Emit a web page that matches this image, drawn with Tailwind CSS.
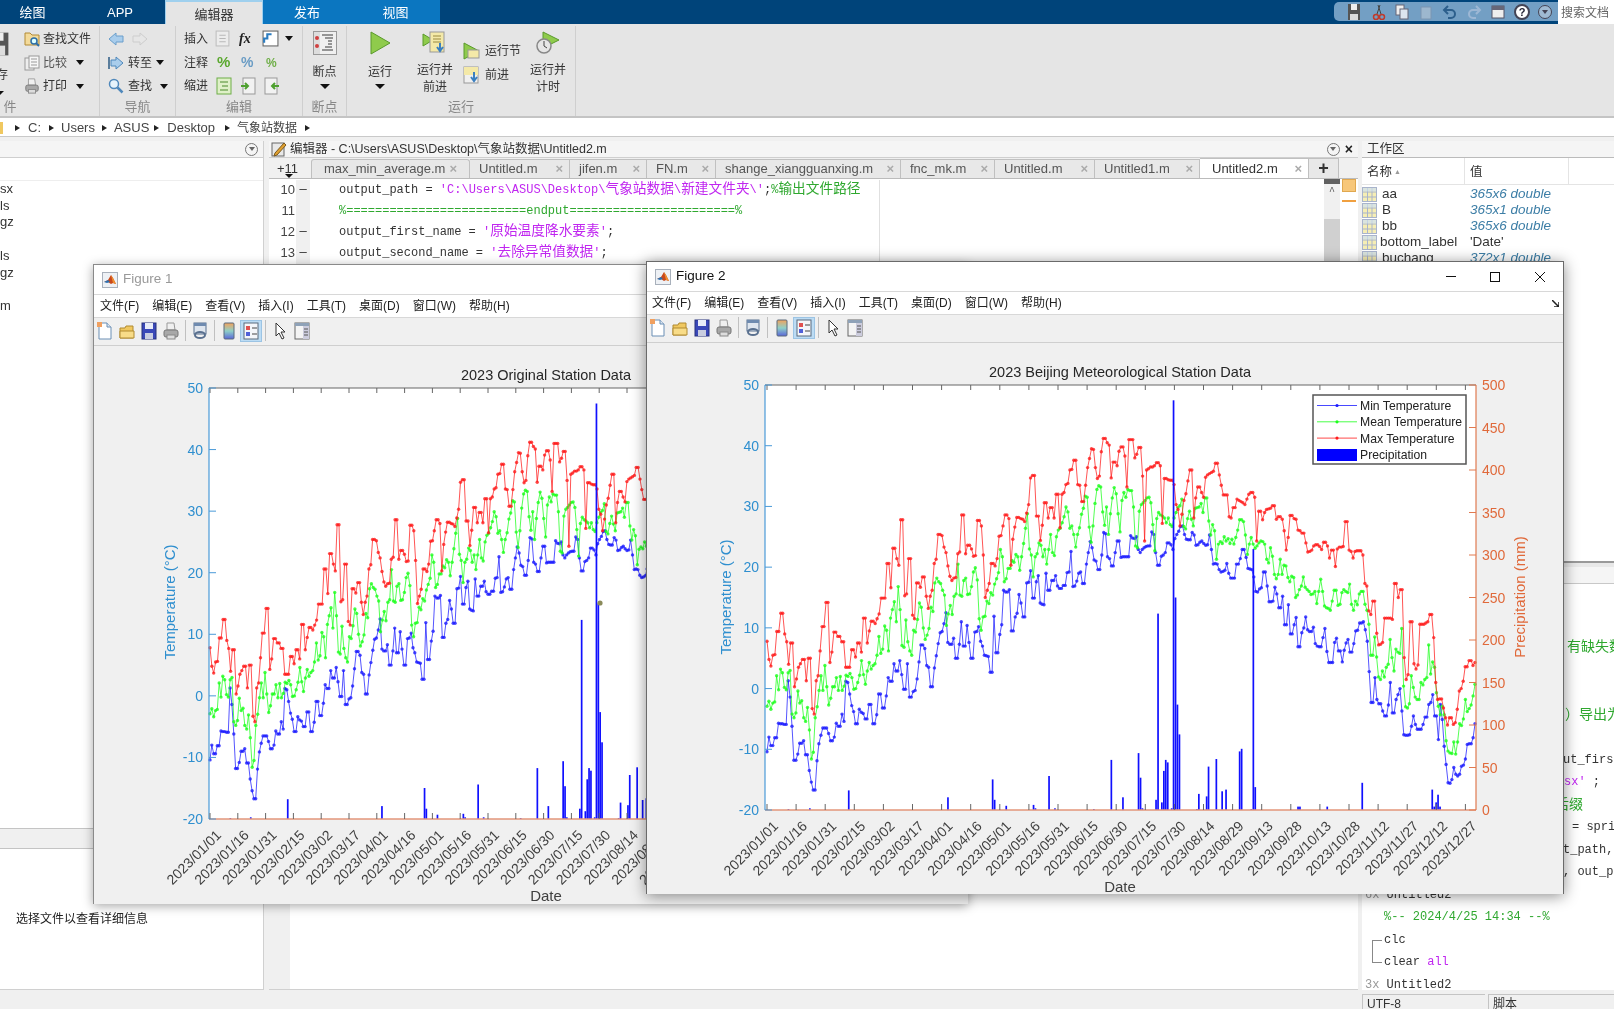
<!DOCTYPE html>
<html lang="en">

<head>
    <meta charset="UTF-8">
    <title>MATLAB</title>
    <script src="https://cdn.jsdelivr.net/npm/@tailwindcss/browser@4"></script>
</head>

<body class="bg-[#f0f0f0] overflow-hidden">

    <!-- shared icons -->
    <svg class="absolute w-0 h-0">
        <defs><linearGradient id="cb" x1="0" y1="0" x2="0" y2="1"><stop offset="0" stop-color="#f4a25a"/><stop offset=".5" stop-color="#8ed0c8"/><stop offset="1" stop-color="#5a66d8"/></linearGradient></defs>
        <symbol id="i-new" viewBox="0 0 16 18"><path d="M2 1h8l4 4v12H2z" fill="#fff" stroke="#6b8fb5"/><path d="M10 1v4h4" fill="#dbe6f2" stroke="#6b8fb5"/><rect x="0" y="0" width="5" height="5" fill="#f0a060"/></symbol>
        <symbol id="i-open" viewBox="0 0 16 18"><path d="M1 6h5l1-2h7v12H1z" fill="#f0c860" stroke="#b08a30"/><path d="M1 9h14v7H1z" fill="#f8dc88" stroke="#b08a30"/></symbol>
        <symbol id="i-save" viewBox="0 0 16 18"><rect x="1" y="1" width="14" height="16" fill="#3a48b8" stroke="#27307c"/><rect x="4" y="1" width="8" height="6" fill="#e8ecf8"/><rect x="4" y="11" width="8" height="6" fill="#c9cde0"/></symbol>
        <symbol id="i-print" viewBox="0 0 16 18"><path d="M4 1h7l1 7H4z" fill="#f0f0f0" stroke="#999"/><rect x="1" y="8" width="14" height="7" rx="2" fill="#a8a8a8" stroke="#777"/><rect x="4" y="13" width="8" height="4" fill="#ddd" stroke="#888"/></symbol>
        <symbol id="i-link" viewBox="0 0 16 18"><rect x="2" y="1" width="12" height="11" fill="#dfe6ef" stroke="#59708f"/><rect x="2" y="1" width="12" height="3" fill="#6f8bb0"/><ellipse cx="8" cy="13" rx="5" ry="3" fill="none" stroke="#59708f" stroke-width="2"/></symbol>
        <symbol id="i-bar" viewBox="0 0 16 18"><rect x="3" y="1" width="10" height="16" rx="1" fill="url(#cb)" stroke="#5a6a7c"/></symbol>
        <symbol id="i-legend" viewBox="0 0 16 18"><rect x="1" y="1" width="14" height="16" fill="#f4f6fa" stroke="#5a6a7c"/><rect x="3" y="4" width="4" height="4" fill="#e05050"/><rect x="3" y="10" width="4" height="4" fill="#5060d8"/><path d="M9 6h5M9 12h5" stroke="#444"/></symbol>
        <symbol id="i-cursor" viewBox="0 0 16 18"><path d="M4 1l9 9H9l3 6-2 1-3-6-3 3z" fill="#fff" stroke="#333"/></symbol>
        <symbol id="i-panel" viewBox="0 0 16 18"><rect x="1" y="1" width="14" height="16" fill="#f4f4f4" stroke="#666"/><rect x="1" y="1" width="14" height="3" fill="#8fa2b8"/><rect x="9" y="4" width="6" height="13" fill="#ccd"/><path d="M10 7h4M10 10h4M10 13h4" stroke="#555"/></symbol>
        <symbol id="i-logo" viewBox="0 0 16 16"><rect x=".5" y=".5" width="15" height="15" fill="#eef1f5" stroke="#a8b0bb"/><path d="M2 10l4-2 3-5 2 3 3 6-3-1-2 1-3-2z" fill="#c8481c"/><path d="M2 10l4-2 2 2-3 1z" fill="#2a6fb0"/><path d="M9 3l2 3 3 6-3-1z" fill="#f09030"/></symbol>
        <symbol id="i-play" viewBox="0 0 24 24"><path d="M3 1l19 11L3 23z" fill="#8fcb4c" stroke="#5a9a2c"/></symbol>
        <symbol id="i-page" viewBox="0 0 16 16"><rect x="2" y="1" width="12" height="14" fill="#f7f7f7" stroke="#888"/><path d="M5 5h6M5 8h6M5 11h6" stroke="#777"/></symbol>
        <symbol id="i-grid" viewBox="0 0 15 15"><rect x=".5" y=".5" width="14" height="14" fill="#f6eeb4" stroke="#a9b4cc"/><path d="M.5 5h14M.5 10h14M5.5.5v14M10 .5v14" stroke="#a9b4cc"/><rect x="1" y="1" width="13" height="3.5" fill="#cfe0f0" opacity=".7"/></symbol>
    </svg>

    <div class="relative w-[1614px] h-[1009px] overflow-hidden flex flex-col text-[#333] blur-[0.4px] font-['Liberation_Sans','Noto_Sans_CJK_SC',sans-serif]">

        <!-- Tab strip -->
        <div class="h-[24px] bg-[#00447a] flex items-stretch text-[13px] text-white shrink-0">
            <div class="w-[61px] text-center leading-[26px] pl-[4px]">绘图</div>
            <div class="w-[104px] text-center leading-[26px] pl-[14px]">APP</div>
            <div class="w-[98px] bg-[#e5e5e5] text-[#333] text-center leading-[26px] border-t-2 border-x border-[#9fd0ee]">编辑器</div>
            <div class="w-[88px] bg-[#0b76c0] text-center leading-[26px]">发布</div>
            <div class="w-[89px] bg-[#0b76c0] text-center leading-[26px]">视图</div>
            <div class="flex-1"></div>
            <!-- quick access -->
            <div class="w-[224px] mt-[2px] mb-[3px] bg-[#739fc4] flex items-center gap-[8px] pl-[12px] rounded-l-[5px]">
                <svg class="w-[16px] h-[18px]" viewBox="0 0 16 18"><rect x="2" y="1" width="12" height="16" fill="#555"/><rect x="5" y="1" width="6" height="6" fill="#eee"/><rect x="4" y="11" width="8" height="6" fill="#ddd"/></svg>
                <svg class="w-[16px] h-[16px]" viewBox="0 0 16 16"><path d="M10 1L7 10M8 1l3 9" stroke="#444" fill="none"/><circle cx="6" cy="13" r="2.5" fill="none" stroke="#c0392b" stroke-width="1.5"/><circle cx="12" cy="13" r="2.5" fill="none" stroke="#c0392b" stroke-width="1.5"/></svg>
                <svg class="w-[16px] h-[16px]" viewBox="0 0 16 16"><rect x="2" y="1" width="8" height="10" fill="#eee" stroke="#667"/><rect x="6" y="5" width="8" height="10" fill="#dce4ee" stroke="#667"/></svg>
                <svg class="w-[16px] h-[16px] opacity-40" viewBox="0 0 16 16"><rect x="3" y="3" width="10" height="12" fill="#ddd" stroke="#889"/></svg>
                <svg class="w-[16px] h-[16px]" viewBox="0 0 16 16"><path d="M6 2L2 6l4 4M2 6h7a4 4 0 010 8H6" fill="none" stroke="#2c5f8c" stroke-width="2"/></svg>
                <svg class="w-[16px] h-[16px] opacity-40" viewBox="0 0 16 16"><path d="M10 2l4 4-4 4M14 6H7a4 4 0 000 8h3" fill="none" stroke="#dde" stroke-width="2"/></svg>
                <svg class="w-[16px] h-[16px]" viewBox="0 0 16 16"><rect x="2" y="2" width="12" height="12" fill="#eee" stroke="#556"/><rect x="2" y="2" width="12" height="4" fill="#667"/></svg>
                <div class="w-[16px] h-[16px] rounded-full bg-white border-2 border-[#445] text-[#223] text-[11px] leading-[12px] text-center font-bold">?</div>
                <div class="w-[14px] h-[14px] rounded-full border border-[#445] bg-[#9fbad2] flex items-center justify-center"><div class="border-x-[3px] border-t-[4px] border-x-transparent border-t-[#445]"></div></div>
            </div>
            <div class="w-[56px] bg-white text-[#666] text-[12px] pl-[3px] leading-[26px]">搜索文档</div>
        </div>

        <!-- Ribbon -->
        <div class="h-[94px] bg-[#e5e5e5] border-b-2 border-[#c4c4c4] flex text-[12px] text-[#333] shrink-0">
            <!-- file group, cut off at the window edge -->
            <div class="w-[100px] mt-[2px] border-r border-[#cfcfcf] flex flex-col">
                <div class="h-[72px] shrink-0 flex">
                    <div class="w-[24px] flex flex-col overflow-hidden">
                        <svg class="w-[26px] h-[26px] ml-[-16px] mt-[5px] shrink-0" viewBox="0 0 16 16"><rect x="1" y="1" width="14" height="14" fill="#555"/><rect x="4" y="1" width="8" height="5" fill="#eee"/><rect x="3" y="9" width="10" height="6" fill="#ddd"/></svg>
                        <div class="ml-[-4px] mt-[9px]">存</div>
                        <div class="ml-[-4px] mt-[7px] w-0 border-x-[4px] border-t-[4px] border-x-transparent border-t-[#111]"></div>
                    </div>
                    <div class="flex flex-col pt-[1px]">
                        <div class="h-[24px] flex items-center gap-[3px]"><svg class="w-[16px] h-[16px]" viewBox="0 0 16 16"><path d="M1 2h5l2 2h7v10H1z" fill="#f3da9a" stroke="#b28a34"/><circle cx="10" cy="10" r="3" fill="#dff" stroke="#2b6ea8" stroke-width="1.5"/><path d="M12 12l3 3" stroke="#2b6ea8" stroke-width="2"/></svg>查找文件</div>
                        <div class="h-[24px] flex items-center gap-[3px]"><svg class="w-[16px] h-[16px]" viewBox="0 0 16 16"><rect x="1" y="3" width="9" height="12" fill="#eee" stroke="#999"/><rect x="5" y="1" width="10" height="12" fill="#f7f7f7" stroke="#999"/><path d="M7 4h6M7 7h6M7 10h6" stroke="#999"/></svg><span class="text-[#555]">比较</span><div class="ml-[6px] border-x-[4px] border-t-[5px] border-x-transparent border-t-[#111]"></div></div>
                        <div class="h-[24px] flex items-center gap-[3px]"><svg class="w-[16px] h-[16px]" viewBox="0 0 16 18"><use href="#i-print"/></svg>打印<div class="ml-[6px] border-x-[4px] border-t-[5px] border-x-transparent border-t-[#111]"></div></div>
                    </div>
                </div>
                <div class="h-[18px] text-[#888] text-[13px] leading-[18px]">&nbsp;件</div>
            </div>

            <!-- navigate -->
            <div class="w-[76px] mt-[2px] border-r border-[#cfcfcf] flex flex-col">
                <div class="h-[72px] shrink-0 flex flex-col pt-[1px] pl-[8px]">
                    <div class="h-[24px] flex items-center gap-[8px]">
                        <svg class="w-[16px] h-[14px]" viewBox="0 0 16 14"><path d="M1 7l7-6v3h7v6H8v3z" fill="#a9cdec" stroke="#6a9ecb"/></svg>
                        <svg class="w-[16px] h-[14px]" viewBox="0 0 16 14"><path d="M15 7L8 1v3H1v6h7v3z" fill="#e6e6e6" stroke="#cdcdcd"/></svg>
                    </div>
                    <div class="h-[24px] flex items-center gap-[4px]">
                        <svg class="w-[16px] h-[14px]" viewBox="0 0 16 14"><path d="M0 1h2v12H0z" fill="#5a7d9c"/><path d="M15 7L8 1v3H3v6h5v3z" fill="#a9cdec" stroke="#4f88bb"/></svg>转至<div class="border-x-[4px] border-t-[5px] border-x-transparent border-t-[#111]"></div>
                    </div>
                    <div class="h-[24px] flex items-center gap-[4px]">
                        <svg class="w-[16px] h-[16px]" viewBox="0 0 16 16"><circle cx="6" cy="6" r="4.5" fill="#e6f3fb" stroke="#4f88bb" stroke-width="1.5"/><path d="M9.5 9.5l5 5" stroke="#4f88bb" stroke-width="2.5"/></svg>查找<div class="ml-[4px] border-x-[4px] border-t-[5px] border-x-transparent border-t-[#111]"></div>
                    </div>
                </div>
                <div class="h-[18px] text-[#888] text-[13px] leading-[18px] text-center">导航</div>
            </div>

            <!-- edit -->
            <div class="w-[127px] mt-[2px] border-r border-[#cfcfcf] flex flex-col">
                <div class="h-[72px] shrink-0 flex flex-col pt-[1px] pl-[8px]">
                    <div class="h-[24px] flex items-center gap-[6px]">插入
                        <svg class="w-[17px] h-[17px] opacity-40" viewBox="0 0 16 16"><use href="#i-page"/></svg>
                        <span class="w-[17px] text-[14px] italic font-bold font-['Liberation_Serif',serif] text-[#222] ml-[2px]">fx</span>
                        <svg class="w-[17px] h-[17px]" viewBox="0 0 16 16"><rect x="1" y="1" width="14" height="14" fill="#fff" stroke="#666"/><path d="M2 12V8h3V4h4" fill="none" stroke="#2c7cc0" stroke-width="2"/></svg>
                        <div class="border-x-[4px] border-t-[5px] border-x-transparent border-t-[#111]"></div>
                    </div>
                    <div class="h-[24px] flex items-center gap-[9px]">注释
                        <span class="w-[15px] text-[15px] font-bold text-[#5aa82e]">%</span>
                        <span class="w-[16px] text-[14px] font-bold text-[#6a9cc4]">%</span>
                        <span class="w-[16px] text-[12px] font-bold text-[#6fae48]">%</span>
                    </div>
                    <div class="h-[24px] flex items-center gap-[8px]">缩进
                        <svg class="w-[16px] h-[18px]" viewBox="0 0 16 18"><rect x="1" y="1" width="14" height="16" fill="#dff0c8" stroke="#6fae48"/><path d="M4 5h8M6 9h6M4 13h8" stroke="#4a8a2a"/></svg>
                        <svg class="w-[16px] h-[18px]" viewBox="0 0 16 18"><rect x="3" y="1" width="12" height="16" fill="#f2f2f2" stroke="#999"/><path d="M1 9h6M5 6l3 3-3 3" fill="none" stroke="#4fa030" stroke-width="2"/></svg>
                        <svg class="w-[16px] h-[18px]" viewBox="0 0 16 18"><rect x="1" y="1" width="12" height="16" fill="#f2f2f2" stroke="#999"/><path d="M15 9H9M11 6L8 9l3 3" fill="none" stroke="#4fa030" stroke-width="2"/></svg>
                    </div>
                </div>
                <div class="h-[18px] text-[#888] text-[13px] leading-[18px] text-center">编辑</div>
            </div>

            <!-- breakpoints -->
            <div class="w-[44px] mt-[2px] border-r border-[#cfcfcf] flex flex-col">
                <div class="h-[72px] shrink-0 flex flex-col items-center pt-[5px]">
                    <svg class="w-[24px] h-[24px]" viewBox="0 0 24 24"><rect x=".5" y=".5" width="23" height="23" fill="#f0f0f0" stroke="#999"/><rect x="1" y="1" width="6" height="22" fill="#ddd"/><circle cx="4" cy="7" r="2" fill="#d04040"/><circle cx="4" cy="15" r="2" fill="#d04040"/><path d="M9 4h11M12 7h8M15 10h4M15 13h4M12 16h7M9 19h11" stroke="#777" stroke-width="1.5"/></svg>
                    <div class="mt-[8px]">断点</div>
                    <div class="mt-[3px] border-x-[5px] border-t-[5px] border-x-transparent border-t-[#111]"></div>
                </div>
                <div class="h-[18px] text-[#888] text-[13px] leading-[18px] text-center">断点</div>
            </div>

            <!-- run -->
            <div class="w-[229px] mt-[2px] border-r border-[#cfcfcf] flex flex-col">
                <div class="h-[72px] shrink-0 flex pt-[5px]">
                    <div class="w-[66px] flex flex-col items-center">
                        <svg class="w-[24px] h-[24px]"><use href="#i-play"/></svg>
                        <div class="mt-[8px]">运行</div>
                        <div class="mt-[3px] border-x-[5px] border-t-[5px] border-x-transparent border-t-[#111]"></div>
                    </div>
                    <div class="w-[44px] flex flex-col items-center leading-[16.5px]">
                        <svg class="w-[26px] h-[24px] shrink-0" viewBox="0 0 26 24"><path d="M1 3l10 6-10 6z" fill="#8fcb4c" stroke="#5a9a2c"/><rect x="8" y="1" width="14" height="20" fill="#f4e9a8" stroke="#999"/><path d="M11 5h8M11 8h8M11 11h8" stroke="#9a8a40"/><path d="M18 12v7M15 16l3 4 3-4" stroke="#3a7fc0" fill="none" stroke-width="2"/></svg>
                        <div class="mt-[7px] text-center whitespace-nowrap">运行并<br>前进</div>
                    </div>
                    <div class="w-[68px] flex flex-col pl-[6px] pt-[11px] gap-[6px]">
                        <div class="h-[18px] flex items-center gap-[4px] whitespace-nowrap"><svg class="w-[18px] h-[18px]" viewBox="0 0 18 18"><path d="M1 1l15 8-15 8z" fill="#8fcb4c" stroke="#5a9a2c"/><rect x="5" y="8" width="11" height="8" fill="#f4e9a8" stroke="#999"/></svg>运行节</div>
                        <div class="h-[18px] flex items-center gap-[4px] whitespace-nowrap"><svg class="w-[18px] h-[18px]" viewBox="0 0 18 18"><rect x="1" y="1" width="14" height="16" fill="#f0f0f0" stroke="#999"/><rect x="1" y="1" width="14" height="8" fill="#f4e9a8"/><path d="M11 6v8M8 11l3 4 3-4" stroke="#3a7fc0" fill="none" stroke-width="2"/></svg>前进</div>
                    </div>
                    <div class="w-[46px] flex flex-col items-center leading-[16.5px]">
                        <svg class="w-[26px] h-[24px] shrink-0" viewBox="0 0 26 24"><path d="M8 1l16 8-16 8z" fill="#8fcb4c" stroke="#5a9a2c"/><circle cx="9" cy="15" r="7" fill="#e6e6e6" stroke="#888" stroke-width="1.5"/><path d="M9 10v5l3 2" stroke="#444" fill="none"/></svg>
                        <div class="mt-[7px] text-center whitespace-nowrap">运行并<br>计时</div>
                    </div>
                </div>
                <div class="h-[18px] text-[#888] text-[13px] leading-[18px] text-center">运行</div>
            </div>
            <div class="flex-1"></div>
        </div>

        <!-- Address bar -->
        <div class="h-[19px] bg-white border-b border-[#c9c9c9] flex items-center pt-[1px] text-[13px] text-[#444] shrink-0">
            <div class="w-[3px] h-[12px] bg-[#f0c860]"></div>
            <div class="ml-[12px] border-y-[3.5px] border-l-[5px] border-y-transparent border-l-[#222]"></div>
            <span class="ml-[8px]">C:</span>
            <div class="ml-[8px] border-y-[3.5px] border-l-[5px] border-y-transparent border-l-[#222]"></div>
            <span class="ml-[7px]">Users</span>
            <div class="ml-[7px] border-y-[3.5px] border-l-[5px] border-y-transparent border-l-[#222]"></div>
            <span class="ml-[7px]">ASUS</span>
            <div class="ml-[5px] border-y-[3.5px] border-l-[5px] border-y-transparent border-l-[#222]"></div>
            <span class="ml-[8px]">Desktop</span>
            <div class="ml-[10px] border-y-[3.5px] border-l-[5px] border-y-transparent border-l-[#222]"></div>
            <span class="ml-[7px] text-[12px]">气象站数据</span>
            <div class="ml-[8px] border-y-[3.5px] border-l-[5px] border-y-transparent border-l-[#222]"></div>
        </div>

        <!-- Panels -->
        <div class="flex-1 min-h-0 flex pt-[4px] bg-[#f0f0f0]">

            <!-- Current folder -->
            <div class="w-[264px] mr-[5px] shrink-0 flex flex-col bg-white border-r border-b border-[#d0d0d0] text-[13px]">
                <div class="h-[17px] bg-[#f5f5f5] border-b border-[#cfcfcf] flex items-center justify-end pr-[5px] shrink-0">
                    <div class="w-[13px] h-[13px] rounded-full border border-[#777] flex items-center justify-center"><div class="border-x-[3px] border-t-[4px] border-x-transparent border-t-[#666]"></div></div>
                </div>
                <div class="h-[23px] border-b border-[#eee] shrink-0"></div>
                <div class="flex flex-col leading-[16.7px] h-[647px] shrink-0">
                    <div>sx</div><div>ls</div><div>gz</div><div>&nbsp;</div><div>ls</div><div>gz</div><div>&nbsp;</div><div>m</div>
                </div>
                <div class="h-[21px] bg-[#f0f0f0] border-y border-[#c4c4c4] shrink-0"></div>
                <div class="flex-1 pl-[16px] pt-[61px] text-[12px] text-[#222]">选择文件以查看详细信息</div>
            </div>

            <!-- Editor -->
            <div class="w-[1089px] mr-[4px] shrink-0 flex flex-col bg-white border-b border-[#d0d0d0]">
                <div class="h-[17px] bg-[#f5f5f5] border-b border-[#cfcfcf] flex items-center text-[12.5px] text-[#333] shrink-0">
                    <svg class="w-[16px] h-[16px] ml-[2px] mr-[3px]" viewBox="0 0 16 16"><rect x="1" y="2" width="12" height="13" fill="#e8e8e8" stroke="#666"/><path d="M4 12L13 2l2 2-9 10-3 1z" fill="#e0a030" stroke="#7a5a20"/></svg>
                    编辑器 - C:\Users\ASUS\Desktop\气象站数据\Untitled2.m
                    <div class="ml-auto mr-[5px] w-[13px] h-[13px] rounded-full border border-[#777] flex items-center justify-center"><div class="border-x-[3px] border-t-[4px] border-x-transparent border-t-[#666]"></div></div>
                    <span class="mr-[5px] text-[14px] font-bold leading-none text-[#222]">×</span>
                </div>
                <!-- file tabs -->
                <div class="h-[21px] bg-[#f0f0f0] flex items-stretch text-[13px] text-[#555] shrink-0 border-b border-[#bbb]">
                    <div class="w-[42px] pl-[8px] leading-[21px] relative text-[#333]">+11
                        <div class="absolute left-[16px] bottom-[0px] border-x-[4px] border-t-[4px] border-x-transparent border-t-[#111]"></div>
                    </div>
                    <div class="w-[159px] bg-[#e8e8e8] border-x border-t border-[#c0c0c0] rounded-t-[3px] flex items-center justify-between px-[12px] mt-[1px]"><span>max_min_average.m</span><span class="text-[#aaa] font-bold">×</span></div>
                    <div class="w-[100px] bg-[#e8e8e8] border-r border-t border-[#c0c0c0] flex items-center justify-between pl-[9px] pr-[6px] mt-[1px]"><span>Untitled.m</span><span class="text-[#aaa] font-bold">×</span></div>
                    <div class="w-[77px] bg-[#e8e8e8] border-r border-t border-[#c0c0c0] flex items-center justify-between pl-[9px] pr-[6px] mt-[1px]"><span>jifen.m</span><span class="text-[#aaa] font-bold">×</span></div>
                    <div class="w-[69px] bg-[#e8e8e8] border-r border-t border-[#c0c0c0] flex items-center justify-between pl-[9px] pr-[6px] mt-[1px]"><span>FN.m</span><span class="text-[#aaa] font-bold">×</span></div>
                    <div class="w-[185px] bg-[#e8e8e8] border-r border-t border-[#c0c0c0] flex items-center justify-between pl-[9px] pr-[6px] mt-[1px]"><span>shange_xiangguanxing.m</span><span class="text-[#aaa] font-bold">×</span></div>
                    <div class="w-[94px] bg-[#e8e8e8] border-r border-t border-[#c0c0c0] flex items-center justify-between pl-[9px] pr-[6px] mt-[1px]"><span>fnc_mk.m</span><span class="text-[#aaa] font-bold">×</span></div>
                    <div class="w-[100px] bg-[#e8e8e8] border-r border-t border-[#c0c0c0] flex items-center justify-between pl-[9px] pr-[6px] mt-[1px]"><span>Untitled.m</span><span class="text-[#aaa] font-bold">×</span></div>
                    <div class="w-[105px] bg-[#e8e8e8] border-r border-t border-[#c0c0c0] flex items-center justify-between pl-[9px] pr-[6px] mt-[1px]"><span>Untitled1.m</span><span class="text-[#aaa] font-bold">×</span></div>
                    <div class="w-[109px] bg-white border-r border-t border-[#c0c0c0] flex items-center justify-between pl-[12px] pr-[6px] text-[#333]"><span>Untitled2.m</span><span class="text-[#aaa] font-bold">×</span></div>
                    <div class="w-[30px] bg-[#e8e8e8] border-r border-t border-[#c0c0c0] text-center text-[18px] font-bold leading-[19px] text-[#333]">+</div>
                </div>
                <!-- code -->
                <div class="h-[85px] flex shrink-0 font-['Liberation_Mono','Noto_Sans_CJK_SC',monospace] text-[12px] leading-[20.9px] relative pt-[1px]">
                    <div class="w-[26px] text-right text-[#444] font-['Liberation_Sans',sans-serif] text-[13px]">
                        <div>10</div><div>11</div><div>12</div><div>13</div>
                    </div>
                    <div class="w-[14px] bg-[#f0f0f0] text-center text-[#333] ml-[1px]">
                        <div>—</div><div>&nbsp;</div><div>—</div><div>—</div>
                    </div>
                    <div class="pl-[29px] w-[570px] border-r border-[#e0e0e0] whitespace-nowrap text-[#333]">
                        <div>output_path = <span class="text-[#c026f0]">'C:\Users\ASUS\Desktop\<span class="text-[13.7px]">气象站数据</span>\<span class="text-[13.7px]">新建文件夹</span>\'</span>;<span class="text-[#2fa82f]">%<span class="text-[13.7px]">输出文件路径</span></span></div>
                        <div class="text-[#2fa82f]">%=========================endput=======================%</div>
                        <div>output_first_name = <span class="text-[#c026f0]">'<span class="text-[13.7px]">原始温度降水要素</span>'</span>;</div>
                        <div>output_second_name = <span class="text-[#c026f0]">'<span class="text-[13.7px]">去除异常值数据</span>'</span>;</div>
                    </div>
                    <!-- scroll bar and overview strip -->
                    <div class="absolute left-[1055px] top-0 bottom-0 w-[16px] bg-[#f0f0f0] flex flex-col items-center">
                        <div class="w-full h-[5px] bg-[#606060]"></div>
                        <div class="text-[#555] text-[10px] leading-[16px]">^</div>
                        <div class="mt-[19px] flex-1 w-full bg-[#d0d0d0]"></div>
                    </div>
                    <div class="absolute left-[1073px] top-0 w-[14px]">
                        <div class="h-[13px] bg-[#f7c77a] border border-[#e0a850]"></div>
                        <div class="mt-[8px] h-[2px] bg-[#f0a040]"></div>
                    </div>
                </div>
                <div class="flex-1 flex">
                    <div class="w-[21px] bg-[#f0f0f0]"></div>
                </div>
            </div>

            <!-- Workspace and history -->
            <div class="w-[252px] min-w-0 shrink-0 overflow-hidden flex flex-col">
                <div class="h-[420px] bg-white flex flex-col shrink-0 text-[13.5px]">
                    <div class="h-[17px] bg-[#f5f5f5] border-b border-[#bbb] pl-[5px] text-[12.5px] leading-[16px] shrink-0">工作区</div>
                    <div class="h-[27px] border-b border-[#e4e4e4] flex items-center text-[12.5px] shrink-0">
                        <div class="w-[103px] h-full flex items-center border-r border-[#e4e4e4] pl-[5px] pt-[3px]">名称<span class="ml-[2px] text-[7px] text-[#999]">▲</span></div>
                        <div class="w-[104px] h-full flex items-center border-r border-[#e4e4e4] pl-[5px] pt-[3px]">值</div>
                    </div>
                    <div class="pt-[1px] leading-[16px]">
                        <div class="flex h-[16px] items-center"><svg class="w-[15px] h-[15px] mr-[5px]"><use href="#i-grid"/></svg><div class="w-[88px]">aa</div><div class="italic text-[#3d7ea6]">365x6 double</div></div>
                        <div class="flex h-[16px] items-center"><svg class="w-[15px] h-[15px] mr-[5px]"><use href="#i-grid"/></svg><div class="w-[88px]">B</div><div class="italic text-[#3d7ea6]">365x1 double</div></div>
                        <div class="flex h-[16px] items-center"><svg class="w-[15px] h-[15px] mr-[5px]"><use href="#i-grid"/></svg><div class="w-[88px]">bb</div><div class="italic text-[#3d7ea6]">365x6 double</div></div>
                        <div class="flex h-[16px] items-center"><svg class="w-[15px] h-[15px] mr-[3px]"><use href="#i-grid"/></svg><div class="w-[90px]">bottom_label</div><div>'Date'</div></div>
                        <div class="flex h-[16px] items-center"><svg class="w-[15px] h-[15px] mr-[5px]"><use href="#i-grid"/></svg><div class="w-[88px]">buchang</div><div class="italic text-[#3d7ea6]">372x1 double</div></div>
                    </div>
                </div>
                <div class="h-[6px] bg-[#e8e8e8] border-t-2 border-[#999] shrink-0"></div>
                <div class="h-[17px] bg-[#f5f5f5] border-b border-[#c8c8c8] shrink-0"></div>
                <!-- command history -->
                <div class="flex-1 bg-white border-b border-[#d0d0d0] pt-[52px] font-['Liberation_Mono','Noto_Sans_CJK_SC',monospace] text-[12px] leading-[22.5px] text-[#333] whitespace-nowrap">
                    <div class="h-[22.5px] pl-[205px] text-[#2fa82f] text-[14px]">有缺失数</div>
                    <div class="h-[22.5px]"></div>
                    <div class="h-[22.5px]"></div>
                    <div class="h-[22.5px] pl-[203px] text-[#2fa82f] text-[14px]">）导出为</div>
                    <div class="h-[22.5px]"></div>
                    <div class="h-[22.5px] pl-[201px]">ut_firs</div>
                    <div class="h-[22.5px] pl-[202px]"><span class="text-[#c026f0]">sx'</span> ;</div>
                    <div class="h-[22.5px] pl-[193px] text-[#2fa82f] text-[14px]">后缀</div>
                    <div class="h-[22.5px] pl-[210px]">= spri</div>
                    <div class="h-[22.5px] pl-[201px]">t_path,</div>
                    <div class="h-[22.5px] pl-[201px]">, out_p</div>
                    <div class="h-[22.5px] pl-[3px]"><span class="text-[#999]">6x</span> Untitled2</div>
                    <div class="h-[22.5px] pl-[22px] text-[#2fa82f]">%-- 2024/4/25 14:34 --%</div>
                    <div class="h-[22.5px] pl-[22px] relative">clc
                        <div class="absolute left-[10px] top-[11px] h-[23px] w-[10px] border-l border-t border-b border-[#888]"></div>
                    </div>
                    <div class="h-[22.5px] pl-[22px]">clear <span class="text-[#c026f0]">all</span></div>
                    <div class="h-[22.5px] pl-[3px]"><span class="text-[#999]">3x</span> Untitled2</div>
                </div>
            </div>
        </div>

        <!-- Status bar -->
        <div class="h-[19px] bg-[#f0f0f0] flex justify-end items-start text-[12px] text-[#333] shrink-0">
            <div class="w-[123px] mt-[4px] h-[15px] mr-[3px] border-l border-t border-[#c4c4c4] pl-[4px] leading-[18px]">UTF-8</div>
            <div class="w-[126px] mt-[4px] h-[15px] border-l border-t border-[#c4c4c4] pl-[4px] leading-[18px]">脚本</div>
        </div>

        <!-- Figure 1 -->
        <div class="absolute left-[93px] top-[264px] w-[875px] h-[640px] flex flex-col bg-[#f0f0f0] border-l border-t border-[#8a8a8a] shadow-[0_2px_10px_rgba(0,0,0,0.35)]">
            <div class="h-[29px] bg-white flex items-center text-[13.5px] text-[#999] shrink-0">
                <svg class="w-[16px] h-[16px] ml-[8px] mr-[5px]"><use href="#i-logo"/></svg>Figure 1
            </div>
            <div class="h-[24px] bg-white border-t border-b border-[#d8d8d8] flex items-center gap-[13px] pl-[6px] text-[12px] text-[#222] shrink-0">
                <span>文件(F)</span><span>编辑(E)</span><span>查看(V)</span><span>插入(I)</span><span>工具(T)</span><span>桌面(D)</span><span>窗口(W)</span><span>帮助(H)</span>
            </div>
            <div class="h-[28px] pb-[2px] border-b border-[#cfcfcf] flex items-center gap-[6px] pl-[3px] shrink-0">
                <svg class="w-[16px] h-[18px]"><use href="#i-new"/></svg>
                <svg class="w-[16px] h-[18px]"><use href="#i-open"/></svg>
                <svg class="w-[16px] h-[18px]"><use href="#i-save"/></svg>
                <svg class="w-[16px] h-[18px]"><use href="#i-print"/></svg>
                <div class="w-px h-[21px] bg-[#c0c0c0]"></div>
                <svg class="w-[16px] h-[18px]"><use href="#i-link"/></svg>
                <div class="w-px h-[21px] bg-[#c0c0c0]"></div>
                <svg class="w-[16px] h-[18px]"><use href="#i-bar"/></svg>
                <div class="w-[22px] h-[22px] -mx-[3px] bg-[#bcdcf4] border border-[#9cc4e4] flex items-center justify-center"><svg class="w-[16px] h-[18px]"><use href="#i-legend"/></svg></div>
                <div class="w-px h-[21px] bg-[#c0c0c0]"></div>
                <svg class="w-[16px] h-[18px]"><use href="#i-cursor"/></svg>
                <svg class="w-[16px] h-[18px]"><use href="#i-panel"/></svg>
            </div>
            <svg id="plot1" class="w-full flex-1 min-h-0"></svg>
        </div>

        <!-- Figure 2 -->
        <div class="absolute left-[646px] top-[261px] w-[918px] h-[633px] flex flex-col bg-[#f0f0f0] border-l border-t border-r border-[#6a6a6a] shadow-[0_2px_14px_rgba(0,0,0,0.45)]">
            <div class="h-[29px] bg-white flex items-center text-[13.5px] text-[#111] shrink-0">
                <svg class="w-[16px] h-[16px] ml-[8px] mr-[5px]"><use href="#i-logo"/></svg>Figure 2
                <div class="ml-auto flex items-center gap-[34px] pr-[17px]">
                    <div class="w-[10px] h-px bg-[#111]"></div>
                    <div class="w-[10px] h-[10px] border border-[#111]"></div>
                    <svg class="w-[12px] h-[12px]" viewBox="0 0 12 12"><path d="M1 1l10 10M11 1L1 11" stroke="#111"/></svg>
                </div>
            </div>
            <div class="h-[24px] bg-white border-t border-b border-[#d8d8d8] flex items-center gap-[13px] pl-[5px] text-[12px] text-[#222] shrink-0">
                <span>文件(F)</span><span>编辑(E)</span><span>查看(V)</span><span>插入(I)</span><span>工具(T)</span><span>桌面(D)</span><span>窗口(W)</span><span>帮助(H)</span>
                <svg class="ml-auto mr-[4px] w-[7px] h-[7px]" viewBox="0 0 7 7"><path d="M0 0l7 7M7 2v5H2" stroke="#222" fill="none" stroke-width="1.5"/></svg>
            </div>
            <div class="h-[28px] pb-[2px] border-b border-[#cfcfcf] flex items-center gap-[6px] pl-[3px] shrink-0">
                <svg class="w-[16px] h-[18px]"><use href="#i-new"/></svg>
                <svg class="w-[16px] h-[18px]"><use href="#i-open"/></svg>
                <svg class="w-[16px] h-[18px]"><use href="#i-save"/></svg>
                <svg class="w-[16px] h-[18px]"><use href="#i-print"/></svg>
                <div class="w-px h-[21px] bg-[#c0c0c0]"></div>
                <svg class="w-[16px] h-[18px]"><use href="#i-link"/></svg>
                <div class="w-px h-[21px] bg-[#c0c0c0]"></div>
                <svg class="w-[16px] h-[18px]"><use href="#i-bar"/></svg>
                <div class="w-[22px] h-[22px] -mx-[3px] bg-[#bcdcf4] border border-[#9cc4e4] flex items-center justify-center"><svg class="w-[16px] h-[18px]"><use href="#i-legend"/></svg></div>
                <div class="w-px h-[21px] bg-[#c0c0c0]"></div>
                <svg class="w-[16px] h-[18px]"><use href="#i-cursor"/></svg>
                <svg class="w-[16px] h-[18px]"><use href="#i-panel"/></svg>
            </div>
            <svg id="plot2" class="w-full flex-1 min-h-0"></svg>
        </div>
    </div>

    <script>
        // daily values read off the reference
        const tMax = [7.8,4.8,3.7,5.5,5.6,9.4,9.4,12.4,12.4,9,7.7,4,7.5,7.5,.3,1.6,3.5,4.1,4.8,4.8,1.3,5,5,-3.3,-4.2,1.3,2.1,6.2,10.2,10.2,14.2,14.2,4.3,6,9.3,9.3,8.6,8.6,7.7,7.7,3.5,3.5,3.5,6.4,6.4,5.2,7.5,7.5,6,11.6,11.6,7.5,9.5,11.1,11.1,10.7,11.5,12.3,14.9,14.9,14.9,20.6,20.6,16.6,23.1,23.1,21.4,20.3,27.8,27.8,15.3,15.6,21.4,21.4,12.1,11.5,17.4,17.4,16.7,18.4,18.4,15.2,13.2,15.2,16.2,20.6,21.3,25.4,25.4,25.2,23.3,22.4,20.2,18.5,17.8,18.2,18.3,22.2,22.5,28.6,28.6,22.2,23.6,23.6,23,21.8,21.9,27.7,27.7,26.8,22,15,16.2,17.3,20.6,20.6,20.2,21.4,25.1,25.2,26.8,28.6,28.6,28,20.3,24.6,26.6,28.2,28.2,28,27.9,27.5,28.9,30.3,34.7,35.1,35.1,28.4,28.4,24.4,26.9,
            30.6,30.6,28.1,29.8,29.8,28.1,32,32,26.5,32,32.3,33.6,33.8,36,36.1,37.6,37.6,33.6,33.5,30.8,30.8,33.5,36.4,37.9,39.5,39.4,36.4,34.6,35,39,41.2,41.2,40.5,40.1,34.7,37.3,37.3,36.7,39.1,39.8,39.8,38.3,33.2,41,41,41,38,38.6,39.7,39.7,35,24.3,36,36.2,36.5,36.5,36.7,37.2,37.2,36.7,27.2,34.6,34.6,34.4,34.3,34.3,33.6,30.3,29.5,26.8,28.7,31,32.1,34.2,36,36,28.1,31.4,33.2,33.2,32.3,31.5,34.8,35.2,35.4,35.6,35.8,37.1,37.1,35.2,33.5,31.9,31.9,31.9,28.3,28.1,29.8,29.8,31.2,31,30.8,30.6,30.3,31.2,32,32.3,32.3,31.5,24.3,29.2,29.2,27.8,29,29.5,29.6,29.7,30.1,30.1,27.9,28.3,28.3,27.9,26,22.8,24.9,28.5,28.5,28,27.9,26.1,26,25.6,25.6,24,22.5,22.6,22.8,23.5,23.7,23.7,23.4,22.9,24.1,24.1,23.5,21.5,22.8,22.8,20.1,23,23.3,23.3,23.4,27.5,27.5,22.8,22.6,21.5,22.6,22.7,22.7,22.7,22,17.3,16.9,12.8,12.2,14.4,14.4,9.1,7.2,7.3,7.6,11.6,11.6,11.6,11.6,11.4,17.3,17.3,15,16.3,16.3,5.1,1.5,2.3,11,11,4.1,3.2,3.9,10.6,10.6,10.6,10.8,11,12.2,12.2,8.4,1,-1.8,-1.7,-1.7,-3.2,-4.8,-6,-4.8,-4.8,-5.9,-5.6,-3.4,-.4,0,1.2,3.6,3.6,4.6,4.6,3.8,4.3];
        const tMean = [-2.9,-2.1,-3.4,-2.4,-2.2,2.1,-.2,3.2,2.6,.2,-.2,2.6,3,-4.2,-4.8,-4,-.4,-2.4,-2,-4.8,-5.4,-3.1,-6.8,-11.6,-10.5,-4.8,-3,-.3,2.1,-.3,3.8,.3,-2.7,-1.6,.3,.3,1.8,-.3,2,-.3,.4,2.2,2,2.5,1.8,-.1,0,1,2.2,4.6,2.3,.7,2.9,4.3,3.2,3.8,4.1,5.5,8.6,5.8,6.5,10.3,9.6,6.2,11.6,13,14.3,11,16.8,13,7.1,6.8,11.3,7.7,6.2,5.5,9.6,9.3,11.4,14.1,13.4,10,8.1,8.8,9.9,13.4,12.7,17.4,18.2,17.6,17.3,16.2,15.4,10.4,12.3,13.7,12.2,15.2,15.6,20.5,15.4,15.2,17.8,18.2,15.5,15.6,16.8,19.2,19.9,17.9,11.5,9.6,11.8,11.9,14.4,14,15.8,15.4,17.2,18.1,19.1,22.9,21.7,17.6,18.1,19.8,19.8,21.1,20.8,22.1,21.7,19.5,21.7,23.9,26.4,28.8,23,22,18.4,21.7,22.2,
            24,23.6,21.7,22.9,20.5,22.9,25.4,22.4,21.9,25,26.1,26.4,27.3,28.3,29.9,29.1,26.4,26.8,25.4,23.3,25.4,26.5,28.7,29.7,31.7,31.5,26.6,24.1,26.8,30.5,32.8,33.4,33.2,29.1,26.9,29.9,25.4,28.8,31.4,33.1,32.1,28.8,25.8,31,32.3,31.5,32.8,32.6,32.6,29.9,23.5,23.2,29.2,30.3,30.6,31,31.4,31.5,30.6,27,22.7,28,29,28.6,28.4,28.1,27.3,28.1,27,26.7,28.1,29,29.8,30.1,31.2,26.7,26.3,28,29.2,27.9,26.8,29.7,29.8,29.9,30.5,29,31.4,31.4,27.6,25.3,27,26,21.3,23.8,24.2,23.9,25,24.3,24.7,23.9,24.6,23.8,24.9,26.1,27.8,27.8,27.5,25.3,22.1,23.8,24.9,23.8,23.1,23.5,24,24.3,24.2,23.8,21.3,20.7,23.2,21.8,18.8,18.1,18.8,21.3,18.8,20.3,20.2,18.3,17.6,18.5,18.3,15,15.4,16.3,16.9,18.4,16.7,16.3,16,15.5,15.6,16,14,16,18,16,13.6,13.3,13.2,12.9,14.4,16.2,16.2,13.7,13.9,15.8,16.3,16,15.8,17.2,13.9,12.9,14.4,13.8,15.6,16,16,13.9,12.9,10.6,5.5,5.5,8.5,5.2,1.9,1.5,2.9,1.9,3.5,4,8.1,5.1,2.9,6.5,6,5.8,9.9,.4,-3,-3.2,-2.5,2.1,.2,-1.4,-1.8,-1.8,1,.6,1.5,1.8,7.2,2.4,4.4,3.5,-.7,-2.9,-4.3,-2.9,-4.3,-8.6,-10.3,-10.6,-10.7,-8.8,-10.8,-8.8,-5.8,-6.1,-5,-1.8,-3.8,-3.3,-2.7,-1.2,.7];
        const tMin = [-10.4,-8,-9.4,-9.4,-8.1,-8.1,-5.7,-5.8,-5.8,-5.9,-5.9,1.3,-1.4,-6.2,-11.8,-11.8,-10.8,-9,-9,-8.6,-10.9,-10.9,-13.5,-15.4,-16.7,-16.7,-11.9,-9.1,-7.7,-6.5,-6.5,-6.5,-7.4,-8.6,-8.6,-8,-5.7,-6.2,-6.2,-4.2,-5.4,1.2,1,-.9,-2.8,-3.8,-5.8,-5.8,-3.4,-3.9,-4.1,-5,-5,-2.6,-2.6,-5.8,-5.8,-4.3,-.9,-.9,-3.2,-3.2,-1.2,1.8,1.2,1.2,4.1,2.9,2.9,4.6,2.3,-.1,-.1,4.1,-1.4,-1.4,-.5,-.3,1.6,4.4,7.2,7.2,6.6,3.8,3.5,.3,.3,3.4,5.4,7.4,9.2,9.4,10.7,12.5,7.6,7.3,7.3,8.3,5,5,7.3,11,7,7,10.4,7.6,5,5,9.3,9.4,10.2,7.8,7,5.5,5.4,5.3,2.7,2.7,11.9,5.9,5.9,8.9,10.5,16.2,15.9,15.9,16.3,9.5,9.5,11.8,12.4,15.5,14.1,11.8,11.8,17.4,17.5,19.4,14.9,14.9,17.6,18.6,
            14.1,13.9,13.8,19,16.2,16.2,17.8,17.8,18.6,16.9,16.5,16.5,17,17,19.1,19.2,22.6,16.8,16.9,17.7,19,19.2,17.3,17.3,20.5,22.4,24.2,23.2,21.2,21,19.6,19.6,22,25.7,25.5,21.7,21.4,20.2,20.2,22.4,24.3,24.3,21.6,21.7,21.7,21.7,21.7,25.2,24.8,24.7,25,22.9,22.4,22.9,23.2,23.4,23.5,23.5,25.8,25.4,22.4,20.3,20.3,21.8,22,22.4,24,24,23.7,22.9,24.7,25.4,25.9,26.7,26.8,25.4,24.6,24.5,24.5,25.7,25.3,23.6,23.7,24.1,24.3,23.9,23.6,23.7,25.3,22.9,20.5,20.6,20.5,19.6,19.2,19.3,19.5,20.6,19,18.2,18.2,18.2,20.5,20.5,21.4,22.9,22.9,21.6,19.8,19.7,19.6,18.4,16,15.9,16.4,16.6,19.2,19.2,16.9,14.3,14.3,14.4,16.7,15.6,13.3,13.3,15.2,10.5,10.5,13.8,9,9,10.5,11.7,6.9,6.9,9.2,10,11.8,9.7,9.4,9.4,10.1,7.4,7,6.9,6.9,8.4,9.9,6.1,4.3,4.3,4.3,7.6,8.3,6.2,6.2,4.4,6.3,7.5,8.1,6,6,7.4,9.5,9.6,10.8,10.8,11,9.7,7.8,2.8,-2.3,-2.3,1.8,-1.8,-2.5,-2.5,-3.7,-4.5,-4.5,-2.7,1,-4,-4,-1.8,-1,0,-3.7,-7.6,-7.7,-7.7,-7.6,-6.2,-4.5,-5.9,-6.7,-6.7,-6.7,-5.9,-4.7,-4.7,-2.6,-2.3,-1,-4.5,-4.5,-8.4,-2.6,-5.1,-9.5,-12.5,-15.5,-15.6,-15,-13,-14.1,-14.4,-14.1,-12.8,-12.6,-11.6,-9.2,-9.1,-9.1,-8.1,-5.8];
        // [day of year, mm]
        const rain = [[11,1],[22,2],[42,23],[93,15],[116,36],[117,12],[123,5],[137,6],[138,2],[145,40],[148,2],[168,1],[177,59],[183,15],[191,67],[192,38],[193,2],[200,12],[201,231],[203,9],[204,46],[205,59],[206,56],[208,2],[209,482],[210,250],[211,124],[212,89],[221,1],[222,19],[226,16],[227,51],[231,60],[234,22],[236,24],[243,69],[244,72],[249,1],[250,307],[251,27],[273,4],[274,4],[288,4],[306,32],[342,24],[343,4],[344,9],[345,18],[346,4]];
        const dateLabels = ['2023/01/01','2023/01/16','2023/01/31','2023/02/15','2023/03/02','2023/03/17','2023/04/01','2023/04/16','2023/05/01','2023/05/16','2023/05/31','2023/06/15','2023/06/30','2023/07/15','2023/07/30','2023/08/14','2023/08/29','2023/09/13','2023/09/28','2023/10/13','2023/10/28','2023/11/12','2023/11/27','2023/12/12','2023/12/27'];

        function drawPlot(id, p) {
            const yT = t => p.bottom - (t + 20) * (p.bottom - p.top) / 70;
            const yR = r => p.bottom - r * (p.bottom - p.top) / 500;
            const dayStep = (p.lastX - p.firstX) / 364;
            let s = '';

            // plot area
            s += `<rect x="${p.left}" y="${p.top}" width="${p.right - p.left}" height="${p.bottom - p.top}" fill="#fff"/>`;

            // traces
            [[tMin, '#1c1cff'], [tMean, '#1cff1c'], [tMax, '#ff1c1c']].forEach(([data, color]) => {
                const step = (p.lastX - p.firstX) / (data.length - 1);
                const pts = data.map((t, i) => [(p.firstX + i * step).toFixed(1), yT(t).toFixed(1)]);
                s += `<polyline points="${pts.map(q => q.join(',')).join(' ')}" fill="none" stroke="${color}" stroke-width="1" opacity=".75"/>`;
                s += pts.map(q => `<circle cx="${q[0]}" cy="${q[1]}" r="1.7" fill="${color}" opacity=".8"/>`).join('');
            });

            // precipitation bars
            rain.forEach(([d, mm]) => {
                const h = p.bottom - yR(mm);
                s += `<rect x="${(p.firstX + d * dayStep - .8).toFixed(1)}" y="${yR(mm).toFixed(1)}" width="1.7" height="${h.toFixed(1)}" fill="#1010ff"/>`;
            });
            if (p.datatip) s += `<circle cx="${p.datatip[0]}" cy="${p.datatip[1]}" r="2.6" fill="#8a8a5a"/>`;

            // frame
            s += `<path d="M${p.left} ${p.top}H${p.right}" stroke="#666" stroke-width="1"/>`;
            s += `<path d="M${p.left} ${p.bottom}H${p.right}" stroke="#e3967a" stroke-width="1.6"/>`;
            s += `<path d="M${p.left} ${p.top}V${p.bottom}" stroke="#4a9ad8" stroke-width="1.2"/>`;
            s += `<path d="M${p.right} ${p.top}V${p.bottom}" stroke="#e07a50" stroke-width="1.2"/>`;

            // x ticks and labels
            dateLabels.forEach((label, i) => {
                const x = p.firstX + i * p.tickStep;
                s += `<path d="M${x} ${p.top}v5M${x} ${p.bottom}v-6" stroke="#666"/>`;
                s += `<text transform="translate(${x + 12},${p.bottom + 17}) rotate(-45)" text-anchor="end" font-size="14" fill="#404040">${label}</text>`;
            });

            // left axis
            for (let t = -20; t <= 50; t += 10) {
                const y = yT(t);
                s += `<path d="M${p.left} ${y}h7" stroke="#4a9ad8"/>`;
                s += `<text x="${p.left - 6}" y="${y + 5}" text-anchor="end" font-size="14" fill="#2f8fcf">${t}</text>`;
            }
            // right axis
            for (let r = 0; r <= 500; r += 50) {
                const y = yR(r);
                s += `<path d="M${p.right} ${y}h-7" stroke="#e07a50"/>`;
                s += `<text x="${p.right + 6}" y="${y + 5}" font-size="14" fill="#e0693a">${r}</text>`;
            }

            // titles
            s += `<text x="${p.midX}" y="${p.top - 8}" text-anchor="middle" font-size="14.5" fill="#262626">${p.title}</text>`;
            s += `<text x="${p.midX}" y="${p.dateY}" text-anchor="middle" font-size="15" fill="#404040">Date</text>`;
            s += `<text transform="translate(${p.left - 34},${p.labelY}) rotate(-90)" text-anchor="middle" font-size="15" fill="#2f8fcf">Temperature (°C)</text>`;
            s += `<text transform="translate(${p.right + 49},${p.labelY}) rotate(-90)" text-anchor="middle" font-size="15" fill="#e0693a">Precipitation (mm)</text>`;

            // legend
            if (p.legend) {
                const lx = p.legend[0], ly = p.legend[1];
                s += `<rect x="${lx}" y="${ly}" width="153" height="69" fill="#fff" stroke="#555" stroke-width="1.5"/>`;
                [['Min Temperature', '#1c1cff'], ['Mean Temperature', '#1cff1c'], ['Max Temperature', '#ff1c1c']].forEach(([name, color], i) => {
                    const y = ly + 10.5 + i * 16.3;
                    s += `<path d="M${lx + 4} ${y}h40" stroke="${color}" opacity=".8"/><circle cx="${lx + 24}" cy="${y}" r="1.6" fill="${color}"/>`;
                    s += `<text x="${lx + 47}" y="${y + 4.5}" font-size="12.2" fill="#222">${name}</text>`;
                });
                s += `<rect x="${lx + 4}" y="${ly + 54}" width="40" height="12" fill="#0000ff"/>`;
                s += `<text x="${lx + 47}" y="${ly + 64}" font-size="12.2" fill="#222">Precipitation</text>`;
            }

            document.getElementById(id).innerHTML = s;
        }

        drawPlot('plot1', {
            left: 115, right: 789, top: 42, bottom: 473, firstX: 116, lastX: 789, tickStep: 27.8,
            midX: 452, dateY: 555, labelY: 256,
            title: '2023 Original Station Data', datatip: [506, 257]
        });
        drawPlot('plot2', {
            left: 118, right: 829, top: 42, bottom: 467, firstX: 120, lastX: 828, tickStep: 29.1,
            midX: 473, dateY: 549, labelY: 254,
            title: '2023 Beijing Meteorological Station Data', legend: [666, 52]
        });
    </script>

</body>

</html>
